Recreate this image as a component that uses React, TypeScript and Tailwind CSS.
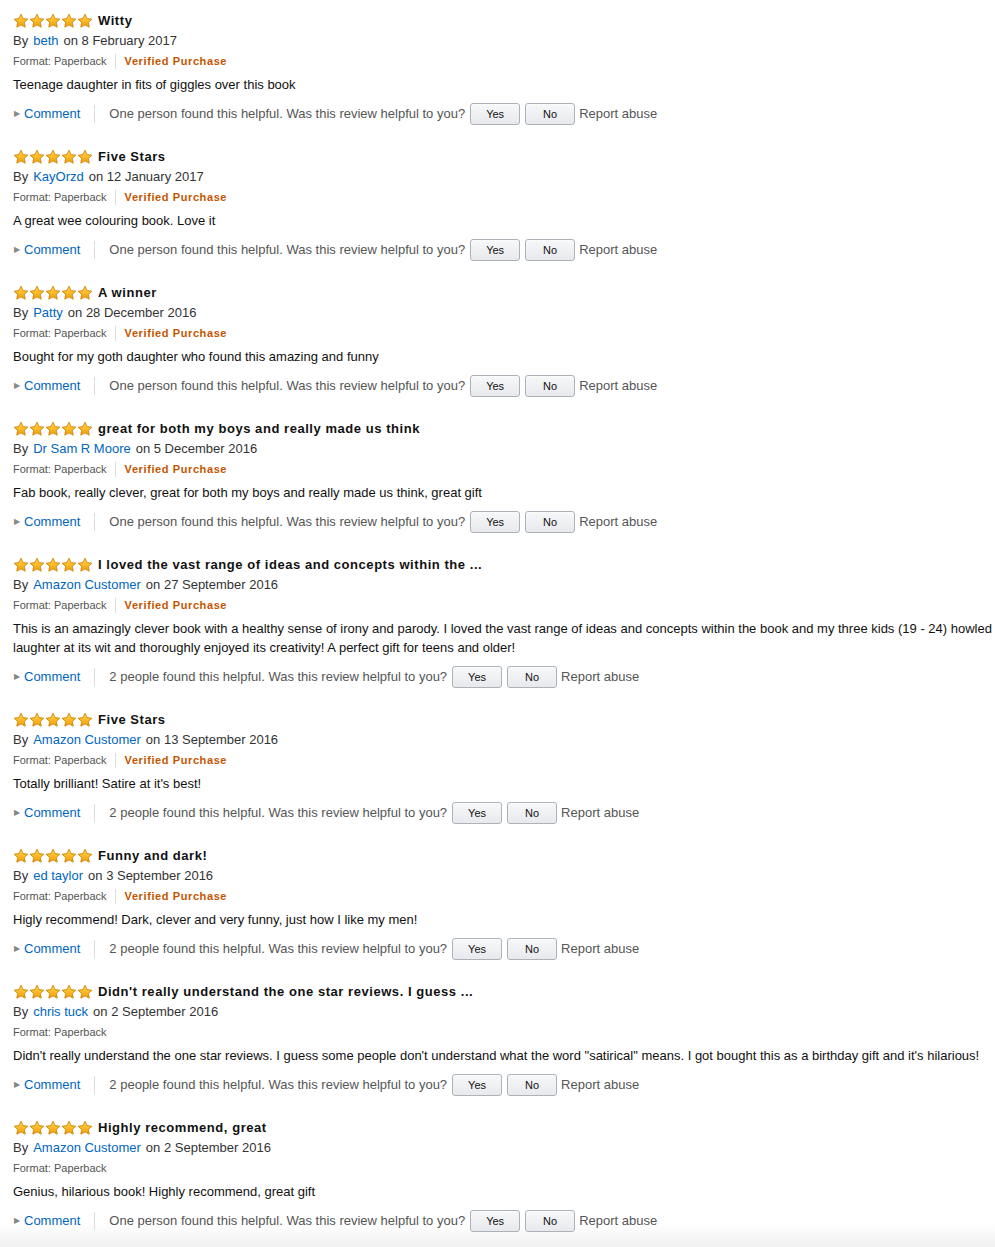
type Review = {
  title: string;
  author: string;
  date: string;
  verified: boolean;
  body: string;
  helpful: string;
};

const reviews: Review[] = [
  {
    title: "Witty",
    author: "beth",
    date: "8 February 2017",
    verified: true,
    body: "Teenage daughter in fits of giggles over this book",
    helpful: "One person found this helpful.",
  },
  {
    title: "Five Stars",
    author: "KayOrzd",
    date: "12 January 2017",
    verified: true,
    body: "A great wee colouring book. Love it",
    helpful: "One person found this helpful.",
  },
  {
    title: "A winner",
    author: "Patty",
    date: "28 December 2016",
    verified: true,
    body: "Bought for my goth daughter who found this amazing and funny",
    helpful: "One person found this helpful.",
  },
  {
    title: "great for both my boys and really made us think",
    author: "Dr Sam R Moore",
    date: "5 December 2016",
    verified: true,
    body: "Fab book, really clever, great for both my boys and really made us think, great gift",
    helpful: "One person found this helpful.",
  },
  {
    title: "I loved the vast range of ideas and concepts within the ...",
    author: "Amazon Customer",
    date: "27 September 2016",
    verified: true,
    body: "This is an amazingly clever book with a healthy sense of irony and parody. I loved the vast range of ideas and concepts within the book and my three kids (19 - 24) howled laughter at its wit and thoroughly enjoyed its creativity! A perfect gift for teens and older!",
    helpful: "2 people found this helpful.",
  },
  {
    title: "Five Stars",
    author: "Amazon Customer",
    date: "13 September 2016",
    verified: true,
    body: "Totally brilliant! Satire at it's best!",
    helpful: "2 people found this helpful.",
  },
  {
    title: "Funny and dark!",
    author: "ed taylor",
    date: "3 September 2016",
    verified: true,
    body: "Higly recommend! Dark, clever and very funny, just how I like my men!",
    helpful: "2 people found this helpful.",
  },
  {
    title: "Didn't really understand the one star reviews. I guess ...",
    author: "chris tuck",
    date: "2 September 2016",
    verified: false,
    body: "Didn't really understand the one star reviews. I guess some people don't understand what the word \"satirical\" means. I got bought this as a birthday gift and it's hilarious!",
    helpful: "2 people found this helpful.",
  },
  {
    title: "Highly recommend, great",
    author: "Amazon Customer",
    date: "2 September 2016",
    verified: false,
    body: "Genius, hilarious book! Highly recommend, great gift",
    helpful: "One person found this helpful.",
  },
];

function Star() {
  return (
    <svg width="16" height="16" viewBox="0 0 24 24" aria-hidden="true">
      <defs>
        <linearGradient id="starFill" x1="0" y1="0" x2="0" y2="1">
          <stop offset="0" stopColor="#ffdb55" />
          <stop offset="1" stopColor="#f09c00" />
        </linearGradient>
      </defs>
      <path
        d="M12 1.8l3.1 6.6 7.1.9-5.2 4.9 1.3 7.1L12 17.8l-6.3 3.5 1.3-7.1-5.2-4.9 7.1-.9z"
        fill="url(#starFill)"
        stroke="#d27f05"
        strokeWidth="1.3"
        strokeLinejoin="round"
      />
    </svg>
  );
}

function VoteButton({ label }: { label: string }) {
  return (
    <button
      type="button"
      className="h-[22px] w-[50px] rounded-[3px] border border-[#adb1b8] bg-gradient-to-b from-[#f7f8fa] to-[#e7e9ec] text-[11px] text-[#111] shadow-[0_1px_0_rgba(255,255,255,0.6)_inset]"
    >
      {label}
    </button>
  );
}

function ReviewItem({ review }: { review: Review }) {
  return (
    <div className="pb-[22px]">
      <div className="flex h-5 items-center">
        <div className="flex">
          {[0, 1, 2, 3, 4].map((i) => (
            <Star key={i} />
          ))}
        </div>
        <span className="ml-[5px] text-[13px] font-bold tracking-[0.55px] text-[#111]">
          {review.title}
        </span>
      </div>
      <div className="flex h-5 items-center text-[13px] text-[#333]">
        By<span className="ml-[5px] text-[#0066c0]">{review.author}</span>
        <span className="ml-[5px]">on {review.date}</span>
      </div>
      <div className="flex h-5 items-center text-[11px] text-[#555]">
        Format: Paperback
        {review.verified && (
          <>
            <span className="ml-[8px] mr-[9px] h-[15px] w-px bg-[#ddd]" />
            <span className="font-bold tracking-[0.6px] text-[#c45500]">Verified Purchase</span>
          </>
        )}
      </div>
      <p className="mt-[4px] text-[13px] leading-[19px] text-[#111]">{review.body}</p>
      <div className="mt-[9px] flex h-[22px] items-center text-[13px]">
        <span className="ml-[1px] text-[8px] text-[#888]">▶</span>
        <span className="ml-[4px] text-[#0066c0]">Comment</span>
        <span className="ml-[14px] mr-[14px] h-[18px] w-px bg-[#ddd]" />
        <span className="text-[#555]">
          {review.helpful} Was this review helpful to you?
        </span>
        <span className="ml-[5px] flex gap-[5px]">
          <VoteButton label="Yes" />
          <VoteButton label="No" />
        </span>
        <span className="ml-[4px] text-[#555]">Report abuse</span>
      </div>
    </div>
  );
}

export default function App() {
  return (
    <div className="min-h-[1247px] bg-[linear-gradient(to_bottom,#ffffff_1222px,#f1f1f1_1247px)] pl-[13px] pt-[11px] font-['Liberation_Sans',Arial,sans-serif]">
      {reviews.map((review, index) => (
        <ReviewItem key={index} review={review} />
      ))}
    </div>
  );
}
